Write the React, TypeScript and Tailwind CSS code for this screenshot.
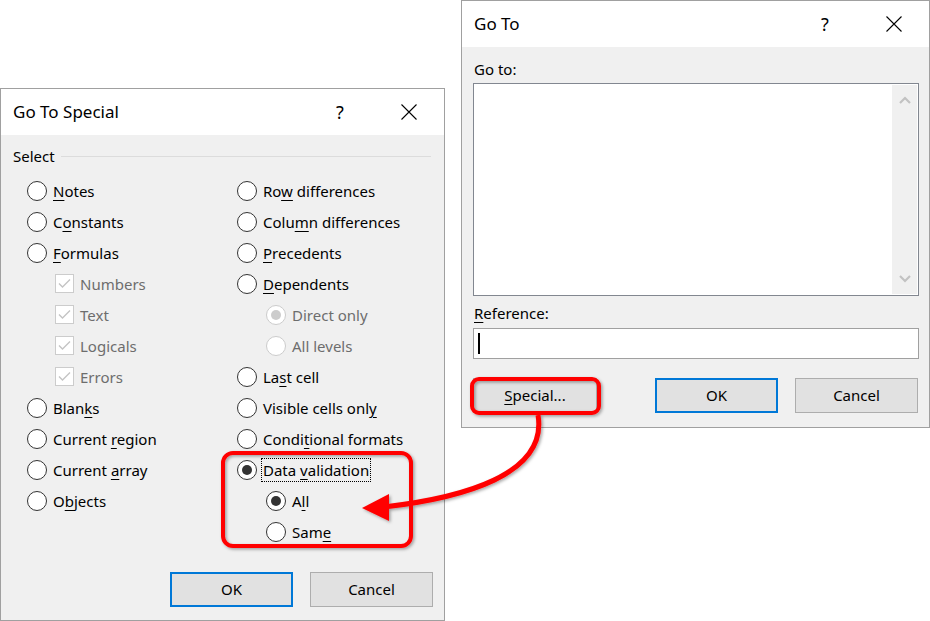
import React from "react";

function Acc({ text, u }: { text: string; u?: number }) {
  if (u === undefined) return <>{text}</>;
  return (
    <>
      {text.slice(0, u)}
      <span className="underline decoration-1 underline-offset-[3px]">{text[u]}</span>
      {text.slice(u + 1)}
    </>
  );
}

function Radio({ checked, disabled }: { checked?: boolean; disabled?: boolean }) {
  return (
    <span
      className={`flex h-[20px] w-[20px] shrink-0 items-center justify-center rounded-full border bg-white ${
        disabled ? "border-[#cccccc]" : "border-[#333333]"
      }`}
    >
      {checked && (
        <span className={`h-[10px] w-[10px] rounded-full ${disabled ? "bg-[#cccccc]" : "bg-[#333333]"}`} />
      )}
    </span>
  );
}

function RadioRow({
  label,
  u,
  checked,
  disabled,
  indent,
  focus,
}: {
  label: string;
  u?: number;
  checked?: boolean;
  disabled?: boolean;
  indent?: boolean;
  focus?: boolean;
}) {
  return (
    <div className={`flex h-[31px] items-center gap-[6px] ${indent ? "pl-[29px]" : ""}`}>
      <Radio checked={checked} disabled={disabled} />
      <span
        className={`leading-[20px] ${disabled ? "text-[#6d6d6d]" : "text-black"} ${
          focus ? "-ml-[2px] flex h-[24px] items-center border border-dotted border-black px-[1px]" : ""
        }`}
      >
        <span>
          <Acc text={label} u={u} />
        </span>
      </span>
    </div>
  );
}

function CheckRow({ label }: { label: string }) {
  return (
    <div className="flex h-[31px] items-center gap-[6px] pl-[28px]">
      <span className="flex h-[19px] w-[19px] shrink-0 items-center justify-center border border-[#cccccc] bg-white">
        <svg width="13" height="11" viewBox="0 0 13 11">
          <polyline points="1,5.5 4.5,9 12,1.5" fill="none" stroke="#c4c4c4" strokeWidth="1.4" />
        </svg>
      </span>
      <span className="leading-[20px] text-[#6d6d6d]">{label}</span>
    </div>
  );
}

function TitleBar({ title }: { title: string }) {
  return (
    <div className="flex h-[46px] shrink-0 items-center bg-white pl-[12px] pr-[20px]">
      <span className="text-[17px] text-black">{title}</span>
      <span className="ml-auto flex w-[30px] justify-center text-[18px] text-black">?</span>
      <span className="ml-[39px] flex w-[30px] justify-center">
        <svg width="16" height="16" viewBox="0 0 16 16">
          <path d="M0.5 0.5 L15.5 15.5 M15.5 0.5 L0.5 15.5" stroke="#000" strokeWidth="1.1" />
        </svg>
      </span>
    </div>
  );
}

function Btn({ children, primary, wide }: { children: React.ReactNode; primary?: boolean; wide?: boolean }) {
  return (
    <div
      className={`flex h-[35px] items-center justify-center bg-[#e1e1e1] text-black ${wide ? "w-[124px]" : "w-[123px]"} ${
        primary ? "border-2 border-[#0078d7]" : "border border-[#adadad]"
      }`}
    >
      {children}
    </div>
  );
}

function Chevron({ up }: { up?: boolean }) {
  return (
    <svg width="12" height="8" viewBox="0 0 12 8">
      <polyline
        points={up ? "1,7 6,2 11,7" : "1,1 6,6 11,1"}
        fill="none"
        stroke="#c2c2c2"
        strokeWidth="2.2"
      />
    </svg>
  );
}

export default function App() {
  return (
    <div className="relative h-[621px] w-[930px] overflow-hidden bg-white font-['Noto_Sans',sans-serif] text-[15px]">
      {/* Go To Special */}
      <div className="absolute left-0 top-[88px] flex h-[533px] w-[445px] flex-col border border-[#a0a0a0] bg-[#f0f0f0]">
        <TitleBar title="Go To Special" />
        <div className="mt-[11px] flex h-[20px] items-center gap-[6px] pl-[12px] pr-[13px]">
          <span className="text-black">Select</span>
          <span className="h-px flex-1 bg-[#dcdcdc]" />
        </div>
        <div className="mt-[9px] grid grid-cols-[210px_1fr] pl-[26px]">
          <div className="flex flex-col">
            <RadioRow label="Notes" u={0} />
            <RadioRow label="Constants" u={1} />
            <RadioRow label="Formulas" u={0} />
            <CheckRow label="Numbers" />
            <CheckRow label="Text" />
            <CheckRow label="Logicals" />
            <CheckRow label="Errors" />
            <RadioRow label="Blanks" u={4} />
            <RadioRow label="Current region" u={8} />
            <RadioRow label="Current array" u={8} />
            <RadioRow label="Objects" u={1} />
          </div>
          <div className="flex flex-col">
            <RadioRow label="Row differences" u={2} />
            <RadioRow label="Column differences" u={4} />
            <RadioRow label="Precedents" u={0} />
            <RadioRow label="Dependents" u={0} />
            <RadioRow label="Direct only" indent checked disabled />
            <RadioRow label="All levels" indent disabled />
            <RadioRow label="Last cell" u={2} />
            <RadioRow label="Visible cells only" u={17} />
            <RadioRow label="Conditional formats" u={5} />
            <RadioRow label="Data validation" u={5} checked focus />
            <RadioRow label="All" u={1} indent checked />
            <RadioRow label="Same" u={3} indent />
          </div>
        </div>
        <div className="mt-[25px] flex justify-end gap-[17px] pr-[11px]">
          <Btn primary>OK</Btn>
          <Btn>Cancel</Btn>
        </div>
      </div>

      {/* Go To */}
      <div className="absolute left-[461px] top-0 flex h-[428px] w-[469px] flex-col border border-[#a0a0a0] bg-[#f0f0f0]">
        <TitleBar title="Go To" />
        <div className="mt-[12px] flex h-[20px] items-center pl-[12px] text-black">Go to:</div>
        <div className="ml-[11px] mr-[10px] mt-[4px] flex h-[213px] border border-[#828790] bg-white">
          <div className="flex-1" />
          <div className="my-[1px] mr-[1px] flex w-[25px] flex-col items-center justify-between bg-[#f0f0f0] py-[11px]">
            <Chevron up />
            <Chevron />
          </div>
        </div>
        <div className="mt-[7px] flex h-[20px] items-center pl-[12px] text-black">
          <span>
            <Acc text="Reference:" u={0} />
          </span>
        </div>
        <div className="ml-[11px] mr-[10px] mt-[5px] flex h-[31px] items-center border border-[#a0a0a0] bg-white pl-[4px]">
          <span className="h-[21px] w-[2px] bg-black" />
        </div>
        <div className="mt-[19px] flex pl-[11px] pr-[11px]">
          <Btn wide>
            <span>
              <Acc text="Special..." u={0} />
            </span>
          </Btn>
          <div className="ml-auto flex gap-[17px]">
            <Btn primary>OK</Btn>
            <Btn>Cancel</Btn>
          </div>
        </div>
      </div>

      {/* annotations */}
      <svg className="pointer-events-none absolute inset-0" width="930" height="621" viewBox="0 0 930 621">
        <defs>
          <filter id="sh" x="-20%" y="-20%" width="140%" height="140%">
            <feDropShadow dx="1.5" dy="1.5" stdDeviation="1.5" floodColor="#000" floodOpacity="0.35" />
          </filter>
        </defs>
        <g filter="url(#sh)">
          <rect x="472" y="379" width="127" height="34" rx="7" fill="none" stroke="#ff0000" strokeWidth="4" />
          <rect x="223" y="453" width="188" height="93" rx="10" fill="none" stroke="#ff0000" strokeWidth="4" />
          <path d="M538 415 C 548 475, 462 498, 384 507" fill="none" stroke="#ff0000" strokeWidth="5" />
          <polygon points="362,508 389,494 389,521" fill="#ff0000" />
        </g>
      </svg>
    </div>
  );
}
